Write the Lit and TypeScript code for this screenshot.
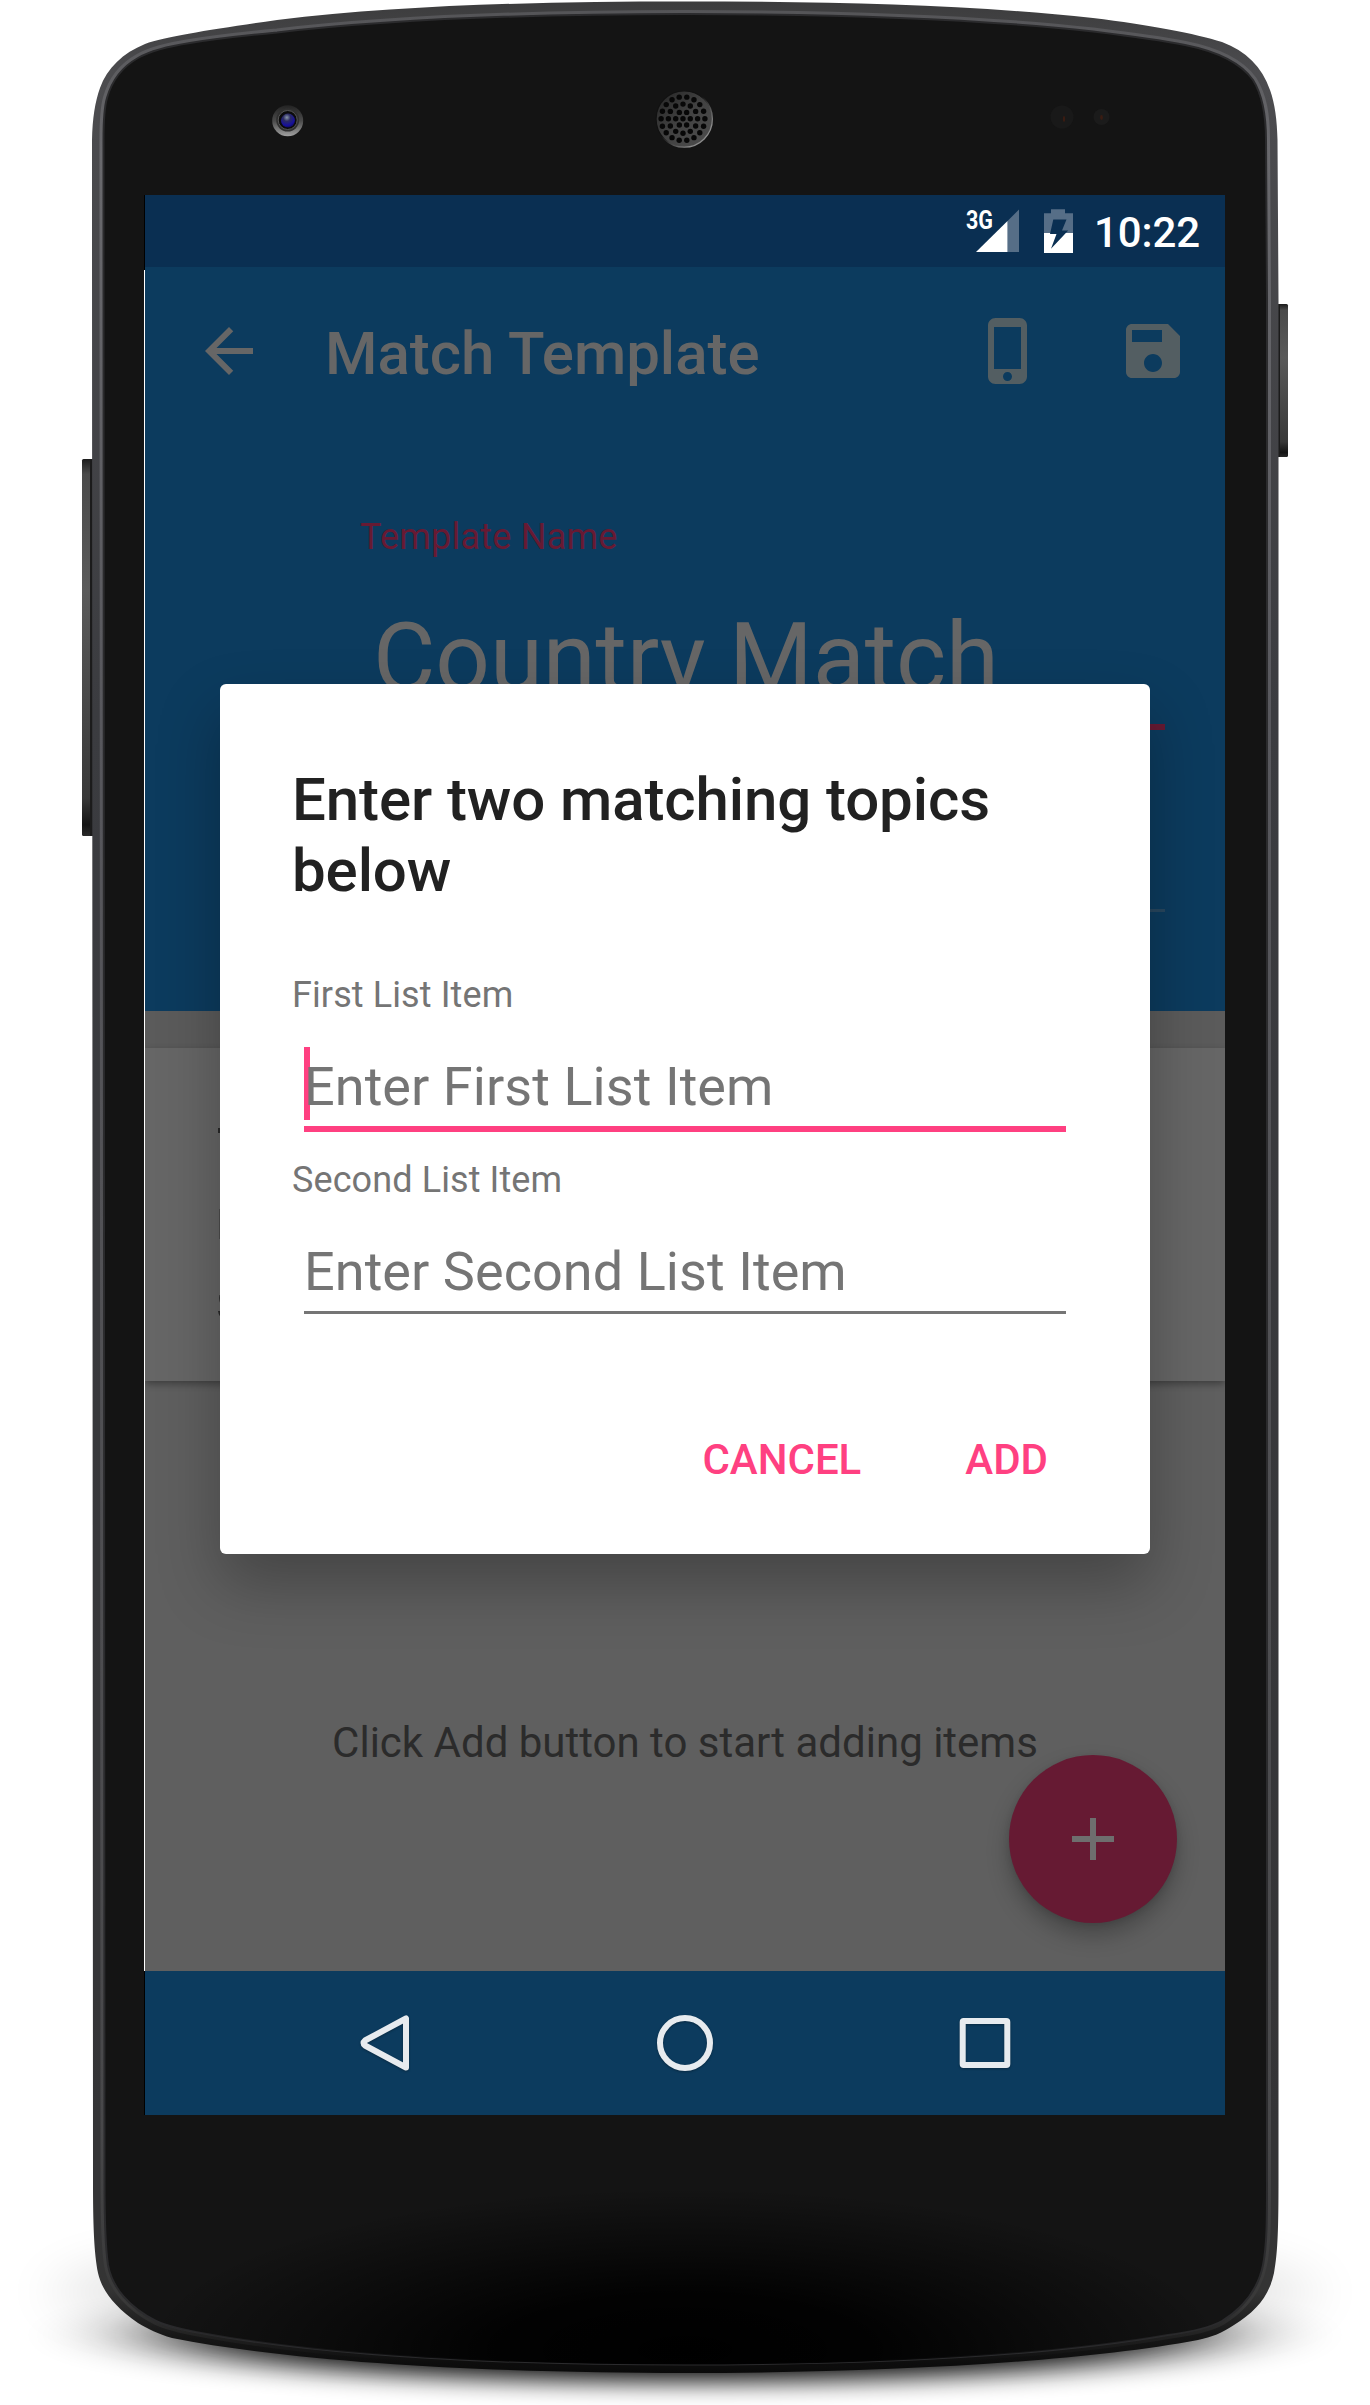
import { LitElement, html, css, svg } from "lit";
import { customElement } from "lit/decorators.js";

/** Earpiece perforation: a centre hole and three concentric rings. */
const speakerHoles = [0, 1, 2, 3].flatMap((ring) =>
  Array.from({ length: ring === 0 ? 1 : ring * 6 }, (_, i) => {
    const a = ring === 0 ? 0 : (i / (ring * 6)) * Math.PI * 2;
    return { x: 683 + Math.cos(a) * ring * 7.3, y: 118.7 + Math.sin(a) * ring * 7.3 };
  })
);

const OUTER =
  "M92 240V140C92.500 118 95 102 100 88C107 68 123 53 145 44C168 36 215 29 277 20C400 5 540 1.500 685 1.500C830 1.500 970 4.500 1093 18C1150 25 1195 33.500 1222 42C1246 51 1262 67 1270 90C1275 104 1277 120 1277.500 140L1278.500 300V2180C1278.500 2225 1278 2252 1274 2273C1269 2297 1255 2312 1234 2325C1222 2333 1212 2337 1198 2340C1070 2364 860 2373 685 2373C510 2373 310 2365 172 2338C158 2334 148 2329 138 2323C115 2307 102 2291 98 2273C94 2252 93 2225 93 2180Z";
const INNER =
  "M103.500 240V140C103.500 122 104 108 107 98C112 80 122 67 138 58C152 50 170 46 190 43C215 39 240 36 277 32.500C400 18 540 14 685 14C830 14 970 18 1093 31.500C1130 36 1160 40 1185 45C1215 51 1240 62 1253 80C1263 96 1266 115 1266 140L1267 300V2180C1267 2220 1267 2245 1263 2265C1258 2290 1243 2308 1222 2321C1210 2328 1190 2332 1168 2335C1040 2357 860 2364.500 685 2364.500C510 2364.500 330 2357 201 2333C184 2330 168 2327 156 2321C130 2308 112 2288 108 2265C105 2245 104.500 2220 104.500 2180Z";

@customElement("device-frame")
export class DeviceFrame extends LitElement {
  static styles = css`
    :host { display: block; }
    svg { display: block; }
  `;

  render() {
    return html`<svg width="1370" height="2405" viewBox="0 0 1370 2405" aria-hidden="true">
      <defs>
        <filter id="soft" x="-20%" y="-80%" width="140%" height="260%">
          <feGaussianBlur stdDeviation="66 12" />
        </filter>
        <filter id="faint" x="-20%" y="-60%" width="140%" height="220%">
          <feGaussianBlur stdDeviation="30 24" />
        </filter>
        <linearGradient id="rim" x1="0" y1="0" x2="0" y2="1">
          <stop offset="0" stop-color="#3c3c3d" />
          <stop offset=".03" stop-color="#4c4c4f" />
          <stop offset=".3" stop-color="#3b3c40" />
          <stop offset=".9" stop-color="#343436" />
          <stop offset=".965" stop-color="#343434" />
          <stop offset=".985" stop-color="#161616" />
          <stop offset="1" stop-color="#0a0a0a" />
        </linearGradient>
        <linearGradient id="shine" x1="0" y1="0" x2="0" y2="1">
          <stop offset="0" stop-color="#555558" />
          <stop offset=".06" stop-color="#69696d" />
          <stop offset=".3" stop-color="#58585d" />
          <stop offset=".9" stop-color="#48484a" />
          <stop offset=".975" stop-color="#383838" />
          <stop offset="1" stop-color="#0c0c0c" />
        </linearGradient>
        <linearGradient id="key" x1="0" y1="0" x2="0" y2="1">
          <stop offset="0" stop-color="#1c1c1c" />
          <stop offset=".04" stop-color="#4a4a4a" />
          <stop offset=".35" stop-color="#5a5a5a" />
          <stop offset=".9" stop-color="#383838" />
          <stop offset=".97" stop-color="#141414" />
          <stop offset="1" stop-color="#2a2a2a" />
        </linearGradient>
        <radialGradient id="pool" cx="685" cy="2350" r="540" gradientUnits="userSpaceOnUse"
          gradientTransform="translate(0 1645) scale(1 .3)">
          <stop offset="0" stop-color="#000" />
          <stop offset=".35" stop-color="#000" stop-opacity=".9" />
          <stop offset=".7" stop-color="#000" stop-opacity=".4" />
          <stop offset="1" stop-color="#000" stop-opacity="0" />
        </radialGradient>
        <linearGradient id="camera" x1="0" y1="0" x2="0" y2="1">
          <stop offset="0" stop-color="#232323" />
          <stop offset=".5" stop-color="#4a4a4a" />
          <stop offset="1" stop-color="#a0a0a0" />
        </linearGradient>
        <radialGradient id="lens" cx=".42" cy=".28" r=".75">
          <stop offset="0" stop-color="#8a98a8" />
          <stop offset=".35" stop-color="#2b2b62" />
          <stop offset=".75" stop-color="#17109c" />
          <stop offset="1" stop-color="#0d0a50" />
        </radialGradient>
        <linearGradient id="grille" x1="0" y1="0" x2="1" y2="1">
          <stop offset="0" stop-color="#242424" />
          <stop offset=".5" stop-color="#424242" />
          <stop offset="1" stop-color="#4e4e4e" />
        </linearGradient>
        <linearGradient id="ring" x1="0" y1="0" x2="1" y2="1">
          <stop offset=".45" stop-color="#111" />
          <stop offset=".8" stop-color="#8a8a8a" />
        </linearGradient>
      </defs>
      <ellipse cx="685" cy="2292" rx="630" ry="60" fill="#000" opacity=".11" filter="url(#faint)" />
      <ellipse cx="685" cy="2335" rx="520" ry="47" fill="#000" opacity=".95" filter="url(#soft)" />

      <rect x="1277" y="304" width="11" height="153" rx="1.500" fill="url(#key)" />
      <rect x="1277" y="304" width="3" height="153" fill="#1b1b1b" />
      <rect x="82" y="459" width="12" height="377" rx="1.500" fill="url(#key)" />
      <rect x="90" y="459" width="3" height="377" fill="#1b1b1b" />

      <path d=${OUTER} fill="url(#rim)" />
      <path d=${INNER} fill="#141414" stroke="url(#shine)" stroke-width="8" />
      <path d=${INNER} fill="#141414" stroke="#2b2b2d" stroke-width="2" />
      <path d=${INNER} fill="url(#pool)" />

      <circle cx="287.700" cy="120.800" r="15.500" fill="url(#camera)" />
      <circle cx="287.700" cy="120" r="11.500" fill="#303030" />
      <circle cx="287.700" cy="120" r="9.500" fill="#0b0b0b" stroke="#555" stroke-width="1" />
      <circle cx="288" cy="120.600" r="7" fill="url(#lens)" />

      <circle cx="684.200" cy="119" r="28.200" fill="url(#grille)" stroke="url(#ring)" stroke-width="1.300" />
      ${speakerHoles.map((h) => svg`<circle cx=${h.x} cy=${h.y} r="2.700" fill="#070707" />`)}

      <circle cx="1062" cy="117" r="11.500" fill="#191919" />
      <ellipse cx="1064" cy="119" rx="1.200" ry="3" fill="#3a1c12" />
      <circle cx="1101.500" cy="117" r="8" fill="#1b1b1b" />
      <ellipse cx="1101.500" cy="117.500" rx="1.400" ry="2.400" fill="#3a1c12" />

      <rect x="144" y="195" width="1" height="1920" fill="#000" />
      <rect x="144" y="270" width="1" height="1701" fill="#fff" />
    </svg>`;
  }
}

@customElement("status-bar")
export class StatusBar extends LitElement {
  static styles = css`
    :host { display: flex; height: 72px; background: #0a2f52; color: #fff; justify-content: flex-end; }
    svg { display: block; flex: none; }
    .time { box-sizing: border-box; width: 147px; font: 500 42px/50px "Roboto", sans-serif; padding: 13px 0 0 16px; letter-spacing: -0.1px; }
  `;

  render() {
    return html`
      <svg width="116" height="72" viewBox="962 195 116 72" aria-hidden="true">
        <text x="966" y="228.500" fill="#fff" font-family="Roboto, sans-serif" font-weight="700" font-size="25.500"
          textLength="27" lengthAdjust="spacingAndGlyphs">3G</text>
        <path d="M1007.500 252V221L1019 209.500V252Z" fill="#566e87" />
        <path d="M976 252L1007.500 221V252Z" fill="#fff" />
        <path d="M1051 209.300h14v4h8V233h-29v-19.700h7Z" fill="#566e87" />
        <path d="M1044 233h29v20h-29Z" fill="#fff" />
        <path d="M1053.300 219.500h13.200l-4.500 11h6.200L1051 248.700l5.500-14.700h-6.500Z" fill="#0a2f52" />
      </svg>
      <span class="time">10:22</span>
    `;
  }
}

@customElement("app-header")
export class AppHeader extends LitElement {
  static styles = css`
    :host { display: flex; flex-direction: column; height: 744px; background: #0c3b5e; font-family: "Roboto", sans-serif; }
    .toolbar { display: flex; align-items: center; height: 168px; padding: 0 36px 0 48px; box-sizing: border-box; }
    .title { margin: 0 auto 0 60px; padding-top: 5px; font-size: 60px; font-weight: 500; line-height: 72px; color: #666; white-space: nowrap; }
    .icon { display: block; width: 72px; height: 72px; fill: #535e62; flex: none; }
    .back { fill: #666; }
    .save { margin-left: 72px; }
    .form { display: flex; flex-direction: column; padding: 81px 60px 0 215px; }
    .label { font-size: 36px; line-height: 42px; letter-spacing: 0.22px; color: #671a33; }
    .name { margin-top: 44px; padding-left: 13px; font-size: 96px; line-height: 112px; letter-spacing: -0.15px; color: #666; white-space: nowrap; }
    .line { height: 6px; margin-top: 10px; background: #671a33; }
    .thin { height: 3px; margin-top: 179px; background: #28475f; }
  `;

  render() {
    return html`
      <div class="toolbar">
        <svg class="icon back" viewBox="0 0 24 24"><path d="M20 11H7.830l5.590-5.590L12 4l-8 8 8 8 1.410-1.410L7.830 13H20v-2z" /></svg>
        <div class="title">Match Template</div>
        <svg class="icon" viewBox="0 0 24 24"><path d="M15.500 1h-8C6.120 1 5 2.120 5 3.500v17C5 21.880 6.120 23 7.500 23h8c1.380 0 2.500-1.120 2.500-2.500v-17C18 2.120 16.880 1 15.500 1zm-4 21c-.83 0-1.500-.67-1.500-1.500s.67-1.500 1.500-1.500 1.500.67 1.500 1.500-.67 1.500-1.500 1.500zm4.500-4H7V4h9v14z" /></svg>
        <svg class="icon save" viewBox="0 0 24 24"><path d="M17 3H5c-1.110 0-2 .9-2 2v14c0 1.100.89 2 2 2h14c1.100 0 2-.9 2-2V7l-4-4zm-5 16c-1.660 0-3-1.340-3-3s1.340-3 3-3 3 1.340 3 3-1.340 3-3 3zm3-10H5V5h10v4z" /></svg>
      </div>
      <div class="form">
        <div class="label">Template Name</div>
        <div class="name">Country Match</div>
        <div class="line"></div>
        <div class="thin"></div>
      </div>
    `;
  }
}

@customElement("item-list")
export class ItemList extends LitElement {
  static styles = css`
    :host { display: flex; flex-direction: column; position: relative; height: 960px; background: #5f5f5f; overflow: hidden; font-family: "Roboto", sans-serif; }
    .gap { height: 37px; background: #5b5b5b; flex: none; }
    .card { height: 333px; background: #666; flex: none; box-shadow: 0 3px 7px rgba(0, 0, 0, .34); padding-left: 73px; box-sizing: border-box; }
    .card svg { display: block; }
    .empty { margin-top: 337px; text-align: center; font-size: 42px; line-height: 50px; color: #2b2b2b; }
    .fab { position: absolute; left: 864px; top: 744px; width: 168px; height: 168px; border-radius: 50%; background: #661a33; box-shadow: 0 12px 22px rgba(0, 0, 0, .26), 0 2px 6px rgba(0, 0, 0, .1); display: grid; place-items: center; }
    .fab svg { display: block; fill: #6e6e6e; }
  `;

  render() {
    return html`
      <div class="gap"></div>
      <div class="card">
        <svg width="4" height="333" viewBox="0 0 4 333">
          <path d="M0 80h4v5H0zM1.500 247q-1 5 1 9h1.500v-9zM0 263h4v6q-3 0-4-6z" fill="#292929" />
          <path d="M1.400 161h2.600v30H1.400z" fill="#3c3c3c" />
        </svg>
      </div>
      <div class="empty">Click Add button to start adding items</div>
      <div class="fab"><svg width="72" height="72" viewBox="0 0 24 24"><path d="M19 13h-6v6h-2v-6H5v-2h6V5h2v6h6v2z" /></svg></div>
    `;
  }
}

@customElement("nav-bar")
export class NavBar extends LitElement {
  static styles = css`
    :host { display: flex; height: 144px; background: #0c3b5e; align-items: center; justify-content: center; gap: 204px; }
    svg { display: block; overflow: visible; filter: drop-shadow(0 1px 1px rgba(0, 0, 0, .3)); }
    svg * { fill: none; stroke: #e7ebef; stroke-width: 6; stroke-linejoin: round; }
  `;

  render() {
    return html`
      <svg width="96" height="96" viewBox="0 0 96 96"><path d="M69 23.500V72.500L28 50.500Q25 48 28 45.500Z" /></svg>
      <svg width="96" height="96" viewBox="0 0 96 96"><circle cx="48" cy="48" r="25" /></svg>
      <svg width="96" height="96" viewBox="0 0 96 96"><rect x="25.700" y="26" width="44.600" height="44" rx="1" /></svg>
    `;
  }
}

@customElement("topic-dialog")
export class TopicDialog extends LitElement {
  static styles = css`
    :host { display: flex; flex-direction: column; box-sizing: border-box; width: 930px; height: 870px; padding: 80px 72px 0; border-radius: 6px; background: #fff; box-shadow: 0 30px 62px rgba(0, 0, 0, .28); font-family: "Roboto", sans-serif; }
    .title { margin: 0; font-size: 60px; font-weight: 500; line-height: 71px; letter-spacing: -0.1px; color: #212121; }
    .fields { display: flex; flex-direction: column; gap: 27px; margin-top: 68px; }
    .label { display: block; font-size: 36px; line-height: 42px; letter-spacing: 0.1px; color: #757575; }
    .input { position: relative; margin: 39px 12px 0; height: 71px; font-size: 54px; line-height: 64px; letter-spacing: 0.06px; color: #757575; border-bottom: 3px solid #757575; white-space: nowrap; }
    .active { border-bottom: 6px solid #ff4081; }
    .caret { position: absolute; left: 0; top: -8px; width: 6px; height: 73px; background: #ff4081; }
    .hint { position: relative; }
    .actions { display: flex; justify-content: flex-end; gap: 104px; margin-top: 121px; padding-right: 30px; font-size: 42px; font-weight: 500; line-height: 50px; color: #ff4081; }
  `;

  render() {
    return html`
      <h2 class="title">Enter two matching topics below</h2>
      <div class="fields">
        <div>
          <span class="label">First List Item</span>
          <div class="input active"><span class="caret"></span><span class="hint">Enter First List Item</span></div>
        </div>
        <div>
          <span class="label">Second List Item</span>
          <div class="input"><span class="hint">Enter Second List Item</span></div>
        </div>
      </div>
      <div class="actions"><span>CANCEL</span><span>ADD</span></div>
    `;
  }
}

@customElement("app-root")
export class AppRoot extends LitElement {
  static styles = css`
    :host { display: block; position: relative; width: 1370px; height: 2405px; background: #fff; overflow: hidden; }
    .frame { position: absolute; inset: 0; }
    .stage { padding: 195px 145px 0; }
    .screen { position: relative; display: flex; flex-direction: column; width: 1080px; height: 1920px; overflow: hidden; }
    .dialog { position: absolute; left: 75px; top: 489px; }
  `;

  render() {
    return html`
      <device-frame class="frame"></device-frame>
      <div class="stage">
        <div class="screen">
          <status-bar></status-bar>
          <app-header></app-header>
          <item-list></item-list>
          <topic-dialog class="dialog"></topic-dialog>
          <nav-bar></nav-bar>
        </div>
      </div>
    `;
  }
}
